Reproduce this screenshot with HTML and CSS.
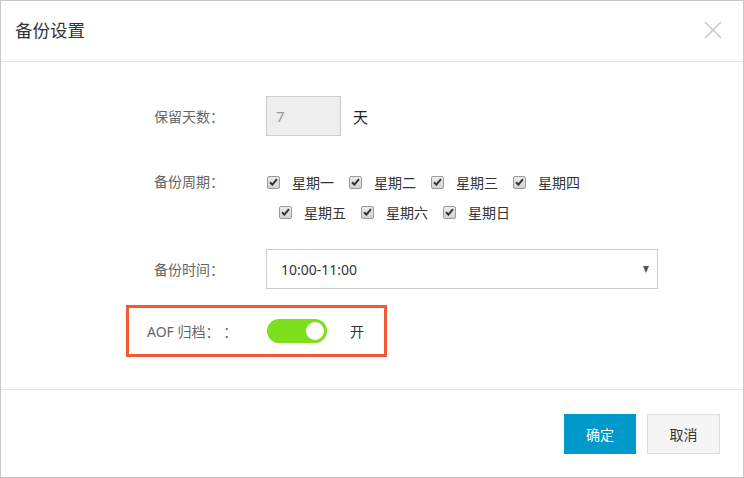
FILE: index.html
```html
<!DOCTYPE html>
<html lang="zh">
<head>
<meta charset="utf-8">
<link rel="stylesheet" href="styles.css">
</head>
<body>
<div class="dialog">
  <div class="dlg-head">
    <div class="dlg-title">备份设置</div>
    <svg class="close" width="18" height="18" viewBox="0 0 18 18"><path d="M1 1L17 17M17 1L1 17" stroke="#c9c9c9" stroke-width="1.6" fill="none"/></svg>
  </div>
  <div class="dlg-body">
    <div class="row row-days">
      <div class="label">保留天数：</div>
      <div class="days-input">7</div>
      <span class="unit">天</span>
    </div>
    <div class="row row-week">
      <div class="label">备份周期：</div>
      <div class="weeks">
        <div class="week-line">
          <span class="cb-item"><span class="cb"><svg width="9" height="8" viewBox="0 0 9 8"><path d="M1 4.2L3.4 6.6L8 1.2" stroke="#333" stroke-width="2" fill="none"/></svg></span>星期一</span>
          <span class="cb-item"><span class="cb"><svg width="9" height="8" viewBox="0 0 9 8"><path d="M1 4.2L3.4 6.6L8 1.2" stroke="#333" stroke-width="2" fill="none"/></svg></span>星期二</span>
          <span class="cb-item"><span class="cb"><svg width="9" height="8" viewBox="0 0 9 8"><path d="M1 4.2L3.4 6.6L8 1.2" stroke="#333" stroke-width="2" fill="none"/></svg></span>星期三</span>
          <span class="cb-item"><span class="cb"><svg width="9" height="8" viewBox="0 0 9 8"><path d="M1 4.2L3.4 6.6L8 1.2" stroke="#333" stroke-width="2" fill="none"/></svg></span>星期四</span>
        </div>
        <div class="week-line second">
          <span class="cb-item"><span class="cb"><svg width="9" height="8" viewBox="0 0 9 8"><path d="M1 4.2L3.4 6.6L8 1.2" stroke="#333" stroke-width="2" fill="none"/></svg></span>星期五</span>
          <span class="cb-item"><span class="cb"><svg width="9" height="8" viewBox="0 0 9 8"><path d="M1 4.2L3.4 6.6L8 1.2" stroke="#333" stroke-width="2" fill="none"/></svg></span>星期六</span>
          <span class="cb-item"><span class="cb"><svg width="9" height="8" viewBox="0 0 9 8"><path d="M1 4.2L3.4 6.6L8 1.2" stroke="#333" stroke-width="2" fill="none"/></svg></span>星期日</span>
        </div>
      </div>
    </div>
    <div class="row row-time">
      <div class="label">备份时间：</div>
      <div class="select">
        <span>10:00-11:00</span>
        <span class="arrow"></span>
      </div>
    </div>
    <div class="aof-box">
      <div class="label aof-label">AOF 归档： ：</div>
      <div class="toggle"><span class="knob"></span></div>
      <span class="toggle-text">开</span>
    </div>
  </div>
  <div class="dlg-foot">
    <button class="btn btn-primary">确定</button>
    <button class="btn btn-default">取消</button>
  </div>
</div>
</body>
</html>
```
FILE: styles.css
```css
html, body {
  margin: 0;
  padding: 0;
  background: #fff;
}
body {
  font-family: "Noto Sans", "Noto Sans CJK SC", sans-serif;
  font-size: 14px;
  color: #333;
}
.dialog {
  box-sizing: border-box;
  width: 744px;
  height: 478px;
  border: 1px solid #c8c8c8;
  display: flex;
  flex-direction: column;
}
.dlg-head {
  height: 60px;
  border-bottom: 1px solid #e3e3e3;
  display: flex;
  align-items: center;
  justify-content: space-between;
  padding: 0 21px 0 14px;
}
.dlg-title {
  font-size: 17.5px;
  color: #333;
  line-height: 1;
  margin-top: -1px;
}
.close {
  display: block;
  margin-top: -2px;
}
.dlg-body {
  flex: 1;
  padding: 34px 0 0 0;
}
.row {
  display: flex;
  align-items: center;
}
.label {
  width: 112px;
  padding-left: 153px;
  color: #666;
  flex: none;
}
.row-days {
  height: 40px;
}
.days-input {
  box-sizing: border-box;
  width: 75px;
  height: 40px;
  background: #eee;
  border: 1px solid #ccc;
  color: #999;
  font-size: 15px;
  line-height: 38px;
  padding-left: 9px;
}
.unit {
  margin-left: 12px;
  font-size: 15px;
  color: #222;
}
.row-week {
  margin-top: 31px;
  align-items: flex-start;
}
.row-week .label {
  line-height: 30px;
}
.weeks {
  display: flex;
  flex-direction: column;
}
.week-line {
  display: flex;
  height: 30px;
  align-items: center;
}
.week-line.second {
  padding-left: 12px;
}
.cb-item {
  display: inline-flex;
  align-items: center;
  width: 82px;
  flex: none;
  color: #333;
}
.cb {
  box-sizing: border-box;
  width: 13px;
  height: 13px;
  border: 1px solid #9a9a9a;
  border-radius: 2px;
  background: linear-gradient(#ececec, #d2d2d2);
  display: inline-flex;
  align-items: center;
  justify-content: center;
  margin-right: 12px;
  margin-left: 1px;
}
.cb svg {
  display: block;
}
.row-time {
  margin-top: 22px;
}
.select {
  box-sizing: border-box;
  width: 392px;
  height: 40px;
  border: 1px solid #ccc;
  display: flex;
  align-items: center;
  justify-content: space-between;
  padding: 0 8px 0 14px;
  color: #333;
}
.arrow {
  width: 0;
  height: 0;
  border-left: 3.5px solid transparent;
  border-right: 3.5px solid transparent;
  border-top: 7px solid #555;
}
.aof-box {
  box-sizing: border-box;
  margin-top: 16px;
  margin-left: 125px;
  width: 261px;
  height: 52px;
  border: 3px solid #f05a36;
  display: flex;
  align-items: center;
}
.aof-label {
  width: 120px;
  padding-left: 18px;
  white-space: pre;
}
.toggle {
  box-sizing: border-box;
  width: 60px;
  height: 24px;
  border-radius: 12px;
  background: #7ee01c;
  display: flex;
  align-items: center;
  justify-content: flex-end;
  padding-right: 3px;
}
.knob {
  width: 18px;
  height: 18px;
  border-radius: 50%;
  background: #fff;
}
.toggle-text {
  margin-left: 23px;
  color: #333;
}
.dlg-foot {
  border-top: 1px solid #e3e3e3;
  display: flex;
  justify-content: flex-end;
  align-items: flex-start;
  padding: 24px 23px 0 0;
  height: 63px;
  gap: 11px;
}
.btn {
  box-sizing: border-box;
  width: 73px;
  height: 40px;
  font-family: "Noto Sans", "Noto Sans CJK SC", sans-serif;
  font-size: 14px;
  padding: 0;
  margin: 0;
  cursor: pointer;
}
.btn-primary {
  background: #0099cc;
  border: 1px solid #0099cc;
  color: #fff;
  width: 72px;
}
.btn-default {
  background: #f5f5f5;
  border: 1px solid #ddd;
  color: #333;
}
```
